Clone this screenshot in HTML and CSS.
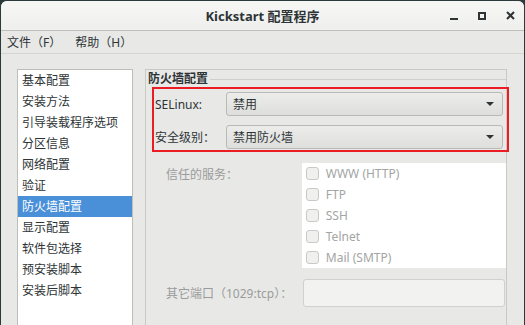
FILE: index.html
```
<html>
    <head>
        <meta charset="utf-8">
        <meta name="viewport" content="width=device-width, initial-scale=1.0">
        <title>Kickstart 配置程序</title>
        <link rel="stylesheet" href="styles.css">
    </head>
    <body>
        <div class="window">
            <div class="titlebar">
                <span></span>
                <span class="title">Kickstart 配置程序</span>
                <div class="controls">
                    <svg width="9" height="9" viewBox="0 0 9 9" class="ctl-min"><rect x="0" y="6" width="8" height="2" fill="#2e3436"/></svg>
                    <svg width="8" height="8" viewBox="0 0 8 8" class="ctl-max"><rect x="1" y="1" width="6" height="6" fill="none" stroke="#2e3436" stroke-width="2"/></svg>
                    <svg width="9" height="9" viewBox="0 0 9 9" class="ctl-close"><path d="M1 1 L8 8 M8 1 L1 8" stroke="#2e3436" stroke-width="2"/></svg>
                </div>
            </div>
            <div class="menubar">
                <span class="menu">文件（F）</span>
                <span class="menu">帮助（H）</span>
            </div>
            <div class="main">
                <ul class="sections">
                    <li>基本配置</li>
                    <li>安装方法</li>
                    <li>引导装载程序选项</li>
                    <li>分区信息</li>
                    <li>网络配置</li>
                    <li>验证</li>
                    <li class="selected">防火墙配置</li>
                    <li>显示配置</li>
                    <li>软件包选择</li>
                    <li>预安装脚本</li>
                    <li>安装后脚本</li>
                </ul>
                <div class="panel">
                    <div class="frame-head">
                        <span class="frame-label">防火墙配置</span>
                        <span class="frame-line"></span>
                    </div>
                    <!-- 红框标注 -->
                    <div class="mark">
                        <div class="row">
                            <span class="row-label">SELinux:</span>
                            <div class="combo"><span>禁用</span><span class="arrow"></span></div>
                        </div>
                        <div class="row">
                            <span class="row-label">安全级别：</span>
                            <div class="combo"><span>禁用防火墙</span><span class="arrow"></span></div>
                        </div>
                    </div>
                    <div class="services">
                        <span class="dim-label">信任的服务：</span>
                        <div class="service-list">
                            <div class="service"><span class="check"></span>WWW (HTTP)</div>
                            <div class="service"><span class="check"></span>FTP</div>
                            <div class="service"><span class="check"></span>SSH</div>
                            <div class="service"><span class="check"></span>Telnet</div>
                            <div class="service"><span class="check"></span>Mail (SMTP)</div>
                        </div>
                    </div>
                    <div class="ports">
                        <span class="dim-label">其它端口（1029:tcp）：</span>
                        <div class="entry"></div>
                    </div>
                </div>
            </div>
        </div>
    </body>
</html>
```
FILE: styles.css
```
body {
    margin: 0;
    background: #2b3b3c;
    font-family: "Noto Sans", "Noto Sans CJK SC", sans-serif;
    font-size: 12px;
    color: #2e3436;
    overflow: hidden;
}
.window {
    margin: 1px 1px 0 1px;
    height: 324px;
    background: #e8e8e7;
    border-radius: 6px 6px 0 0;
    overflow: hidden;
}
.titlebar {
    height: 29px;
    display: grid;
    grid-template-columns: 1fr auto 1fr;
    align-items: center;
    background: linear-gradient(#f6f6f5, #efefee);
    border-bottom: 1px solid #bfbfbc;
}
.title {
    font-weight: bold;
    font-size: 13px;
}
.controls {
    display: flex;
    justify-content: flex-end;
    align-items: center;
    padding-right: 9px;
}
.ctl-min {
    margin-right: 19px;
    margin-top: 2px;
}
.ctl-max {
    margin-right: 20px;
}
.menubar {
    height: 22px;
    display: flex;
    align-items: center;
    border-bottom: 1px solid #d5d5d2;
    padding-left: 6px;
}
.menu {
    margin-right: 14px;
}
.main {
    display: flex;
    padding: 15px 0 0 16px;
    gap: 12px;
    height: 300px;
}
.sections {
    list-style: none;
    margin: 0;
    padding: 0;
    width: 114px;
    background: #fff;
    border: 1px solid #bdbdba;
    border-bottom: none;
}
.sections li {
    height: 21px;
    line-height: 21px;
    padding-left: 4px;
    white-space: nowrap;
}
.sections li.selected {
    background: #4a90d9;
    color: #fff;
}
.panel {
    width: 360px;
    border: 1px solid #c9c9c6;
    border-bottom: none;
}
.frame-head {
    display: flex;
    align-items: center;
    padding: 2px 0 0 2px;
    height: 14px;
}
.frame-label {
    font-weight: bold;
    line-height: 14px;
}
.frame-line {
    flex: 1;
    margin-left: 2px;
    border-bottom: 1px solid #cfcfcc;
}
.mark {
    margin: 1px -3px 0 6px;
    border: 2px solid #ec1c24;
    padding: 3px 4px 0 1px;
    height: 58px;
    overflow: hidden;
}
.row {
    display: flex;
    align-items: center;
    height: 24px;
    margin-bottom: 9px;
}
.row-label {
    width: 71px;
}
.combo {
    flex: 1;
    height: 22px;
    display: flex;
    align-items: center;
    justify-content: space-between;
    padding: 0 8px 0 6px;
    border: 1px solid #b9b9b6;
    border-radius: 3px;
    background: linear-gradient(#ececeb, #dededc);
}
.arrow {
    width: 0;
    height: 0;
    border-left: 4px solid transparent;
    border-right: 4px solid transparent;
    border-top: 4px solid #2e3436;
}
.dim-label {
    color: #9a9c9b;
    width: 137px;
    padding-left: 20px;
    white-space: nowrap;
}
.services {
    display: flex;
    margin-top: 11px;
}
.services .dim-label {
    padding-top: 2px;
}
.service-list {
    width: 202px;
    background: #fff;
    padding: 0 0 0 4px;
}
.service {
    height: 21px;
    display: flex;
    align-items: center;
    color: #a3a5a4;
}
.check {
    width: 11px;
    height: 11px;
    border: 1px solid #c9c9c6;
    border-radius: 3px;
    background: #f0f0ef;
    margin-right: 7px;
}
.ports {
    display: flex;
    align-items: center;
    margin-top: 11px;
}
.entry {
    width: 200px;
    height: 26px;
    background: #f2f2f1;
    border: 1px solid #d0d0cd;
    border-radius: 3px;
}
```
